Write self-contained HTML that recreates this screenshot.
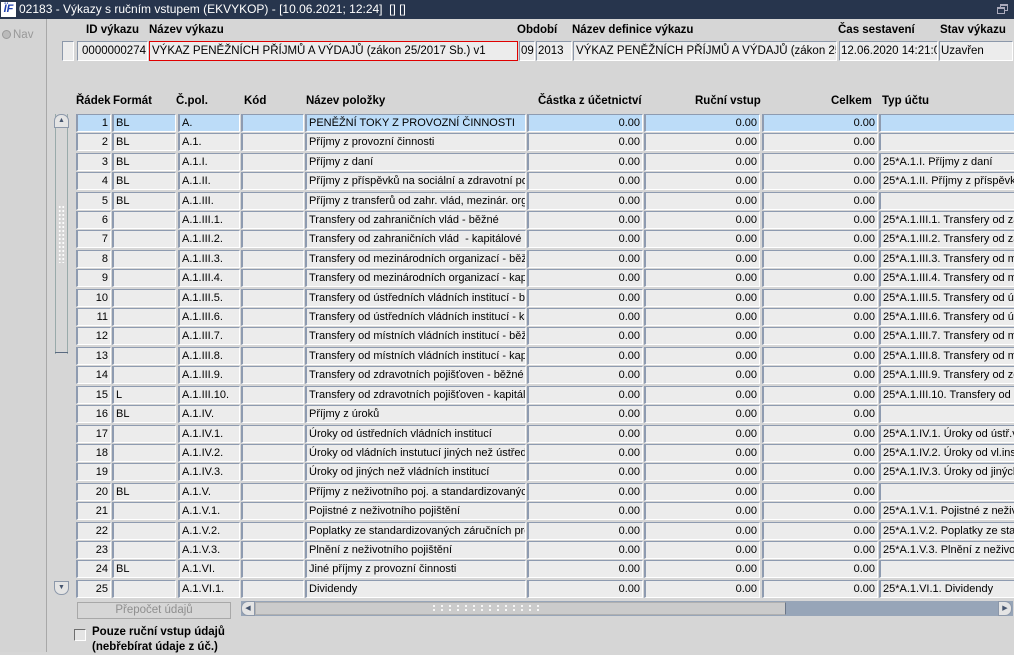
<!DOCTYPE html>
<html><head><meta charset="utf-8"><style>
*{box-sizing:border-box;margin:0;padding:0}
body{width:1014px;height:652px;overflow:hidden;background:#d6d6d6;font-family:"Liberation Sans",Arial,sans-serif;font-size:11px;color:#000;position:relative}
.abs{position:absolute}
.tb{left:0;top:0;width:1014px;height:19px;background:#27354d;color:#fff;font-size:12px;line-height:19px;padding-left:19px;white-space:nowrap}
.logo{left:1px;top:2px;width:15px;height:15px;background:#fff;color:#1c3fb0;font:bold italic 11px/15px "Liberation Sans",sans-serif;text-align:center}
.lp{left:0;top:19px;width:47px;height:633px;background:#d4d4d4;border-right:1px solid #a8a8a8}
.lbl{font-weight:bold;font-size:11.5px;white-space:nowrap}
.f{position:absolute;height:20px;background:#ececec;border:1px solid #8c98aa;border-right-color:#fff;border-bottom-color:#fff;line-height:18px;padding:0 3px;white-space:nowrap;overflow:hidden;font-size:11.5px}
.rows{position:absolute;left:76px;top:114px;width:938px;height:485px;overflow:hidden}
.r{position:relative;height:19.42px}
.r div{position:absolute;top:0;height:18px;background:#ececec;border:1px solid #8e9bb0;border-left:2px solid #8e9bb0;border-right:1px solid #fff;border-bottom:1px solid #fff;line-height:17px;padding:0 2px;white-space:nowrap;overflow:hidden}
.r .a{left:0;width:35px;text-align:right}
.r .b{left:36px;width:64px}
.r .c{left:102px;width:62px}
.r .d{left:165px;width:63px}
.r .e{left:229px;width:221px}
.r .g{left:451px;width:116px;text-align:right}
.r .h{left:568px;width:116px;text-align:right}
.r .i{left:686px;width:116px;text-align:right}
.r .j{left:803px;width:140px}
.sel div{background:#bcdcf8}
</style></head><body>
<div class="abs tb">02183 - Výkazy s ručním vstupem (EKVYKOP) - [10.06.2021; 12:24]&nbsp; [] []</div>
<div class="abs logo">ÏF</div>
<div class="abs" style="left:1000px;top:4px;width:8px;height:7px;border:1px solid #aab;border-top-width:2px"></div>
<div class="abs" style="left:997px;top:7px;width:8px;height:7px;border:1px solid #aab;border-top-width:2px;background:#27354d"></div>
<div class="abs lp"></div>
<div class="abs" style="left:2px;top:30px;width:9px;height:9px;border-radius:50%;background:#bbb;border:1px solid #999"></div>
<div class="abs" style="left:13px;top:29px;color:#999;font-size:11.5px">Nav</div>

<div class="abs lbl" style="left:86px;top:24px">ID výkazu</div>
<div class="abs lbl" style="left:149px;top:24px">Název výkazu</div>
<div class="abs lbl" style="left:517px;top:24px">Období</div>
<div class="abs lbl" style="left:572px;top:24px">Název definice výkazu</div>
<div class="abs lbl" style="left:838px;top:24px">Čas sestavení</div>
<div class="abs lbl" style="left:940px;top:24px">Stav výkazu</div>

<div class="f" style="left:62px;top:41px;width:12px"></div>
<div class="f" style="left:77px;top:41px;width:71px;text-align:right;padding-right:1px">0000000274</div>
<div class="f" style="left:149px;top:41px;width:369px;border:1px solid #e00000;padding-left:2px">VÝKAZ PENĚŽNÍCH PŘÍJMŮ A VÝDAJŮ (zákon 25/2017 Sb.) v1</div>
<div class="f" style="left:519px;top:41px;width:16px;padding:0 1px">09</div>
<div class="f" style="left:536px;top:41px;width:36px;padding:0 1px">2013</div>
<div class="f" style="left:573px;top:41px;width:264px;padding:0 2px">VÝKAZ PENĚŽNÍCH PŘÍJMŮ A VÝDAJŮ (zákon 25/2017 Sb.) v1</div>
<div class="f" style="left:839px;top:41px;width:99px;padding:0 1px">12.06.2020 14:21:06</div>
<div class="f" style="left:939px;top:41px;width:74px;padding:0 1px">Uzavřen</div>

<div class="abs lbl" style="left:76px;top:95px">Řádek</div>
<div class="abs lbl" style="left:113px;top:95px">Formát</div>
<div class="abs lbl" style="left:176px;top:95px">Č.pol.</div>
<div class="abs lbl" style="left:244px;top:95px">Kód</div>
<div class="abs lbl" style="left:306px;top:95px">Název položky</div>
<div class="abs lbl" style="left:538px;top:95px">Částka z účetnictví</div>
<div class="abs lbl" style="left:695px;top:95px">Ruční vstup</div>
<div class="abs lbl" style="left:831px;top:95px">Celkem</div>
<div class="abs lbl" style="left:882px;top:95px">Typ účtu</div>

<!-- vertical scrollbar -->
<div class="abs" style="left:55px;top:114px;width:13px;height:240px;border-left:1px solid #9aa;border-right:1px solid #9aa"></div>
<div class="abs" style="left:55px;top:352px;width:13px;height:1px;background:#5a6a80"></div>
<div class="abs" style="left:54px;top:114px;width:15px;height:14px;border:1px solid #8c98aa;border-radius:7px 7px 0 0;background:#e4e4e4;text-align:center;font-size:7px;line-height:12px;color:#46556e">▲</div>
<div class="abs" style="left:54px;top:581px;width:15px;height:14px;border:1px solid #8c98aa;border-radius:0 0 7px 7px;background:#e4e4e4;text-align:center;font-size:7px;line-height:12px;color:#46556e">▼</div>
<div class="abs" style="left:58px;top:205px;width:7px;height:58px;background:radial-gradient(circle,#fff 0.8px,transparent 1.2px) 0 0/3.5px 4px"></div>

<div class="rows">
<div class="r sel"><div class="a">1</div><div class="b">BL</div><div class="c">A.</div><div class="d"></div><div class="e">PENĚŽNÍ TOKY Z PROVOZNÍ ČINNOSTI</div><div class="g">0.00</div><div class="h">0.00</div><div class="i">0.00</div><div class="j"></div></div>
<div class="r"><div class="a">2</div><div class="b">BL</div><div class="c">A.1.</div><div class="d"></div><div class="e">Příjmy z provozní činnosti</div><div class="g">0.00</div><div class="h">0.00</div><div class="i">0.00</div><div class="j"></div></div>
<div class="r"><div class="a">3</div><div class="b">BL</div><div class="c">A.1.I.</div><div class="d"></div><div class="e">Příjmy z daní</div><div class="g">0.00</div><div class="h">0.00</div><div class="i">0.00</div><div class="j">25*A.1.I. Příjmy z daní</div></div>
<div class="r"><div class="a">4</div><div class="b">BL</div><div class="c">A.1.II.</div><div class="d"></div><div class="e">Příjmy z příspěvků na sociální a zdravotní poj</div><div class="g">0.00</div><div class="h">0.00</div><div class="i">0.00</div><div class="j">25*A.1.II. Příjmy z příspěvků</div></div>
<div class="r"><div class="a">5</div><div class="b">BL</div><div class="c">A.1.III.</div><div class="d"></div><div class="e">Příjmy z transferů od zahr. vlád, mezinár. org</div><div class="g">0.00</div><div class="h">0.00</div><div class="i">0.00</div><div class="j"></div></div>
<div class="r"><div class="a">6</div><div class="b"></div><div class="c">A.1.III.1.</div><div class="d"></div><div class="e">Transfery od zahraničních vlád - běžné</div><div class="g">0.00</div><div class="h">0.00</div><div class="i">0.00</div><div class="j">25*A.1.III.1. Transfery od zahr</div></div>
<div class="r"><div class="a">7</div><div class="b"></div><div class="c">A.1.III.2.</div><div class="d"></div><div class="e">Transfery od zahraničních vlád&nbsp; - kapitálové</div><div class="g">0.00</div><div class="h">0.00</div><div class="i">0.00</div><div class="j">25*A.1.III.2. Transfery od zahr</div></div>
<div class="r"><div class="a">8</div><div class="b"></div><div class="c">A.1.III.3.</div><div class="d"></div><div class="e">Transfery od mezinárodních organizací - běžné</div><div class="g">0.00</div><div class="h">0.00</div><div class="i">0.00</div><div class="j">25*A.1.III.3. Transfery od mez</div></div>
<div class="r"><div class="a">9</div><div class="b"></div><div class="c">A.1.III.4.</div><div class="d"></div><div class="e">Transfery od mezinárodních organizací - kapitálové</div><div class="g">0.00</div><div class="h">0.00</div><div class="i">0.00</div><div class="j">25*A.1.III.4. Transfery od mez</div></div>
<div class="r"><div class="a">10</div><div class="b"></div><div class="c">A.1.III.5.</div><div class="d"></div><div class="e">Transfery od ústředních vládních institucí - běžné</div><div class="g">0.00</div><div class="h">0.00</div><div class="i">0.00</div><div class="j">25*A.1.III.5. Transfery od úst</div></div>
<div class="r"><div class="a">11</div><div class="b"></div><div class="c">A.1.III.6.</div><div class="d"></div><div class="e">Transfery od ústředních vládních institucí - kapitálové</div><div class="g">0.00</div><div class="h">0.00</div><div class="i">0.00</div><div class="j">25*A.1.III.6. Transfery od úst</div></div>
<div class="r"><div class="a">12</div><div class="b"></div><div class="c">A.1.III.7.</div><div class="d"></div><div class="e">Transfery od místních vládních institucí - běžné</div><div class="g">0.00</div><div class="h">0.00</div><div class="i">0.00</div><div class="j">25*A.1.III.7. Transfery od mís</div></div>
<div class="r"><div class="a">13</div><div class="b"></div><div class="c">A.1.III.8.</div><div class="d"></div><div class="e">Transfery od místních vládních institucí - kapitálové</div><div class="g">0.00</div><div class="h">0.00</div><div class="i">0.00</div><div class="j">25*A.1.III.8. Transfery od mís</div></div>
<div class="r"><div class="a">14</div><div class="b"></div><div class="c">A.1.III.9.</div><div class="d"></div><div class="e">Transfery od zdravotních pojišťoven - běžné</div><div class="g">0.00</div><div class="h">0.00</div><div class="i">0.00</div><div class="j">25*A.1.III.9. Transfery od zdr</div></div>
<div class="r"><div class="a">15</div><div class="b">L</div><div class="c">A.1.III.10.</div><div class="d"></div><div class="e">Transfery od zdravotních pojišťoven - kapitálové</div><div class="g">0.00</div><div class="h">0.00</div><div class="i">0.00</div><div class="j">25*A.1.III.10. Transfery od zdr</div></div>
<div class="r"><div class="a">16</div><div class="b">BL</div><div class="c">A.1.IV.</div><div class="d"></div><div class="e">Příjmy z úroků</div><div class="g">0.00</div><div class="h">0.00</div><div class="i">0.00</div><div class="j"></div></div>
<div class="r"><div class="a">17</div><div class="b"></div><div class="c">A.1.IV.1.</div><div class="d"></div><div class="e">Úroky od ústředních vládních institucí</div><div class="g">0.00</div><div class="h">0.00</div><div class="i">0.00</div><div class="j">25*A.1.IV.1. Úroky od ústř.vl</div></div>
<div class="r"><div class="a">18</div><div class="b"></div><div class="c">A.1.IV.2.</div><div class="d"></div><div class="e">Úroky od vládních instutucí jiných než ústředních</div><div class="g">0.00</div><div class="h">0.00</div><div class="i">0.00</div><div class="j">25*A.1.IV.2. Úroky od vl.inst</div></div>
<div class="r"><div class="a">19</div><div class="b"></div><div class="c">A.1.IV.3.</div><div class="d"></div><div class="e">Úroky od jiných než vládních institucí</div><div class="g">0.00</div><div class="h">0.00</div><div class="i">0.00</div><div class="j">25*A.1.IV.3. Úroky od jiných</div></div>
<div class="r"><div class="a">20</div><div class="b">BL</div><div class="c">A.1.V.</div><div class="d"></div><div class="e">Příjmy z neživotního poj. a standardizovaných</div><div class="g">0.00</div><div class="h">0.00</div><div class="i">0.00</div><div class="j"></div></div>
<div class="r"><div class="a">21</div><div class="b"></div><div class="c">A.1.V.1.</div><div class="d"></div><div class="e">Pojistné z neživotního pojištění</div><div class="g">0.00</div><div class="h">0.00</div><div class="i">0.00</div><div class="j">25*A.1.V.1. Pojistné z neživot</div></div>
<div class="r"><div class="a">22</div><div class="b"></div><div class="c">A.1.V.2.</div><div class="d"></div><div class="e">Poplatky ze standardizovaných záručních programů</div><div class="g">0.00</div><div class="h">0.00</div><div class="i">0.00</div><div class="j">25*A.1.V.2. Poplatky ze stand</div></div>
<div class="r"><div class="a">23</div><div class="b"></div><div class="c">A.1.V.3.</div><div class="d"></div><div class="e">Plnění z neživotního pojištění</div><div class="g">0.00</div><div class="h">0.00</div><div class="i">0.00</div><div class="j">25*A.1.V.3. Plnění z neživot</div></div>
<div class="r"><div class="a">24</div><div class="b">BL</div><div class="c">A.1.VI.</div><div class="d"></div><div class="e">Jiné příjmy z provozní činnosti</div><div class="g">0.00</div><div class="h">0.00</div><div class="i">0.00</div><div class="j"></div></div>
<div class="r"><div class="a">25</div><div class="b"></div><div class="c">A.1.VI.1.</div><div class="d"></div><div class="e">Dividendy</div><div class="g">0.00</div><div class="h">0.00</div><div class="i">0.00</div><div class="j">25*A.1.VI.1. Dividendy</div></div>
</div>

<!-- horizontal scrollbar -->
<div class="abs" style="left:241px;top:601px;width:772px;height:15px;background:#97a5b8"></div>
<div class="abs" style="left:241px;top:601px;width:14px;height:15px;background:#e4e4e4;border:1px solid #8c98aa;border-radius:7px 0 0 7px;font-size:7px;line-height:13px;text-align:center;color:#46556e">◀</div>
<div class="abs" style="left:255px;top:602px;width:531px;height:13px;background:#cbcbcb;border:1px solid #b0b0b0;border-right-color:#6a7688"></div>
<div class="abs" style="left:430px;top:604px;width:112px;height:8px;background:radial-gradient(circle,#fff 0.8px,transparent 1.2px) 0 0/8px 4px"></div>
<div class="abs" style="left:998px;top:601px;width:14px;height:15px;background:#e4e4e4;border:1px solid #8c98aa;border-radius:0 7px 7px 0;font-size:7px;line-height:13px;text-align:center;color:#46556e">▶</div>

<div class="abs" style="left:77px;top:602px;width:154px;height:17px;border:1px solid #a8a8a8;background:#d6d6d6;color:#8f8f8f;text-align:center;line-height:15px;font-size:11.5px">Přepočet údajů</div>
<div class="abs" style="left:74px;top:629px;width:12px;height:12px;border:1px solid #6e6e6e;border-right-color:#fff;border-bottom-color:#fff;background:#e4e4e4"></div>
<div class="abs lbl" style="left:92px;top:625px;line-height:15px">Pouze ruční vstup údajů<br>(nebřebírat údaje z úč.)</div>
</body></html>
